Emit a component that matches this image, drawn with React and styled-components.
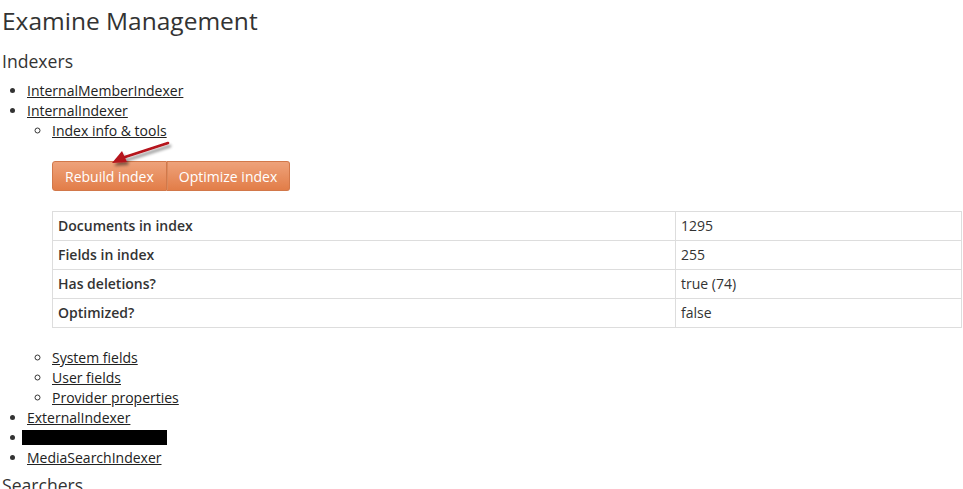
import React from "react";
import styled, { createGlobalStyle } from "styled-components";

const Global = createGlobalStyle`
  html, body { margin: 0; padding: 0; background: #fff; }
  body { font-family: "Open Sans", "Liberation Sans", sans-serif; color: #333; font-size: 14px; line-height: 20px; }
`;

const Page = styled.div`
  position: relative;
  padding: 0 1px 0 2px;
  height: 489px;
  overflow: hidden;
`;

const Title = styled.h1`
  font-size: 24.5px;
  font-weight: 400;
  line-height: 36px;
  margin: 3px 0 10px;
  color: #333;
`;

const Section = styled.h2`
  font-size: 17.6px;
  font-weight: 400;
  line-height: 24px;
  margin: 0 0 ${(p) => (p.$last ? "0" : "8px")};
  margin-top: ${(p) => (p.$last ? "5px" : "0")};
  color: #333;
`;

const List = styled.ul`
  margin: 0;
  padding-left: 25px;
  list-style-type: ${(p) => (p.$nested ? "circle" : "disc")};
`;

const Item = styled.li`
  line-height: 20px;
`;

const Link = styled.a`
  color: #222;
  text-decoration: underline;
  cursor: pointer;
`;

const Redacted = styled.span`
  display: inline-block;
  vertical-align: top;
  width: 145px;
  height: 15px;
  margin: 2px 0 0 -5px;
  background: #000;
`;

const Tools = styled.div`
  padding: 20px 0 20px;
`;

const ButtonGroup = styled.div`
  display: inline-flex;
  margin-bottom: 20px;
`;

const Button = styled.button`
  font-family: "Open Sans", "Liberation Sans", sans-serif;
  font-size: 14px;
  color: #fff;
  height: 30px;
  padding: 0 12px;
  border: 1px solid #d2784a;
  background: linear-gradient(#eea27a, #e27d48);
  border-radius: ${(p) => (p.$first ? "3px 0 0 3px" : "0 3px 3px 0")};
  border-left-width: ${(p) => (p.$first ? "1px" : "0")};
  box-shadow: ${(p) => (p.$first ? "none" : "inset 1px 0 0 #d98a5e")};
  cursor: pointer;
`;

const Table = styled.table`
  width: 100%;
  border-collapse: collapse;
  border: 1px solid #ddd;
`;

const Row = styled.tr``;

const Cell = styled.td`
  border: 1px solid #ddd;
  height: 28px;
  padding: 0 5px;
  font-weight: ${(p) => (p.$head ? 600 : 400)};
  color: #333;
  width: ${(p) => (p.$head ? "612px" : "auto")};
`;

const Arrow = styled.svg`
  position: absolute;
  left: 105px;
  top: 138px;
  overflow: visible;
`;

const rows = [
  ["Documents in index", "1295"],
  ["Fields in index", "255"],
  ["Has deletions?", "true (74)"],
  ["Optimized?", "false"],
];

export default function App() {
  return (
    <Page>
      <Global />
      <Title>Examine Management</Title>
      <Section>Indexers</Section>
      <List>
        <Item><Link>InternalMemberIndexer</Link></Item>
        <Item>
          <Link>InternalIndexer</Link>
          <List $nested>
            <Item>
              <Link>Index info &amp; tools</Link>
              <Tools>
                <ButtonGroup>
                  <Button $first>Rebuild index</Button>
                  <Button>Optimize index</Button>
                </ButtonGroup>
                <Table>
                  <tbody>
                    {rows.map(([k, v]) => (
                      <Row key={k}>
                        <Cell $head>{k}</Cell>
                        <Cell>{v}</Cell>
                      </Row>
                    ))}
                  </tbody>
                </Table>
              </Tools>
            </Item>
            <Item><Link>System fields</Link></Item>
            <Item><Link>User fields</Link></Item>
            <Item><Link>Provider properties</Link></Item>
          </List>
        </Item>
        <Item><Link>ExternalIndexer</Link></Item>
        <Item><Redacted /></Item>
        <Item><Link>MediaSearchIndexer</Link></Item>
      </List>
      <Section $last>Searchers</Section>
      <Arrow width="70" height="30" viewBox="0 0 70 30">
        <defs>
          <filter id="sh" x="-30%" y="-30%" width="160%" height="160%">
            <feGaussianBlur in="SourceAlpha" stdDeviation="1.6" />
            <feOffset dx="2" dy="3" result="b" />
            <feComponentTransfer><feFuncA type="linear" slope="0.45" /></feComponentTransfer>
            <feMerge><feMergeNode /><feMergeNode in="SourceGraphic" /></feMerge>
          </filter>
        </defs>
        <g filter="url(#sh)">
          <line x1="63" y1="5" x2="20" y2="19" stroke="#b5121b" strokeWidth="2.6" strokeLinecap="round" />
          <polygon points="7,25 17,13 22,24" fill="#b5121b" />
        </g>
      </Arrow>
    </Page>
  );
}
